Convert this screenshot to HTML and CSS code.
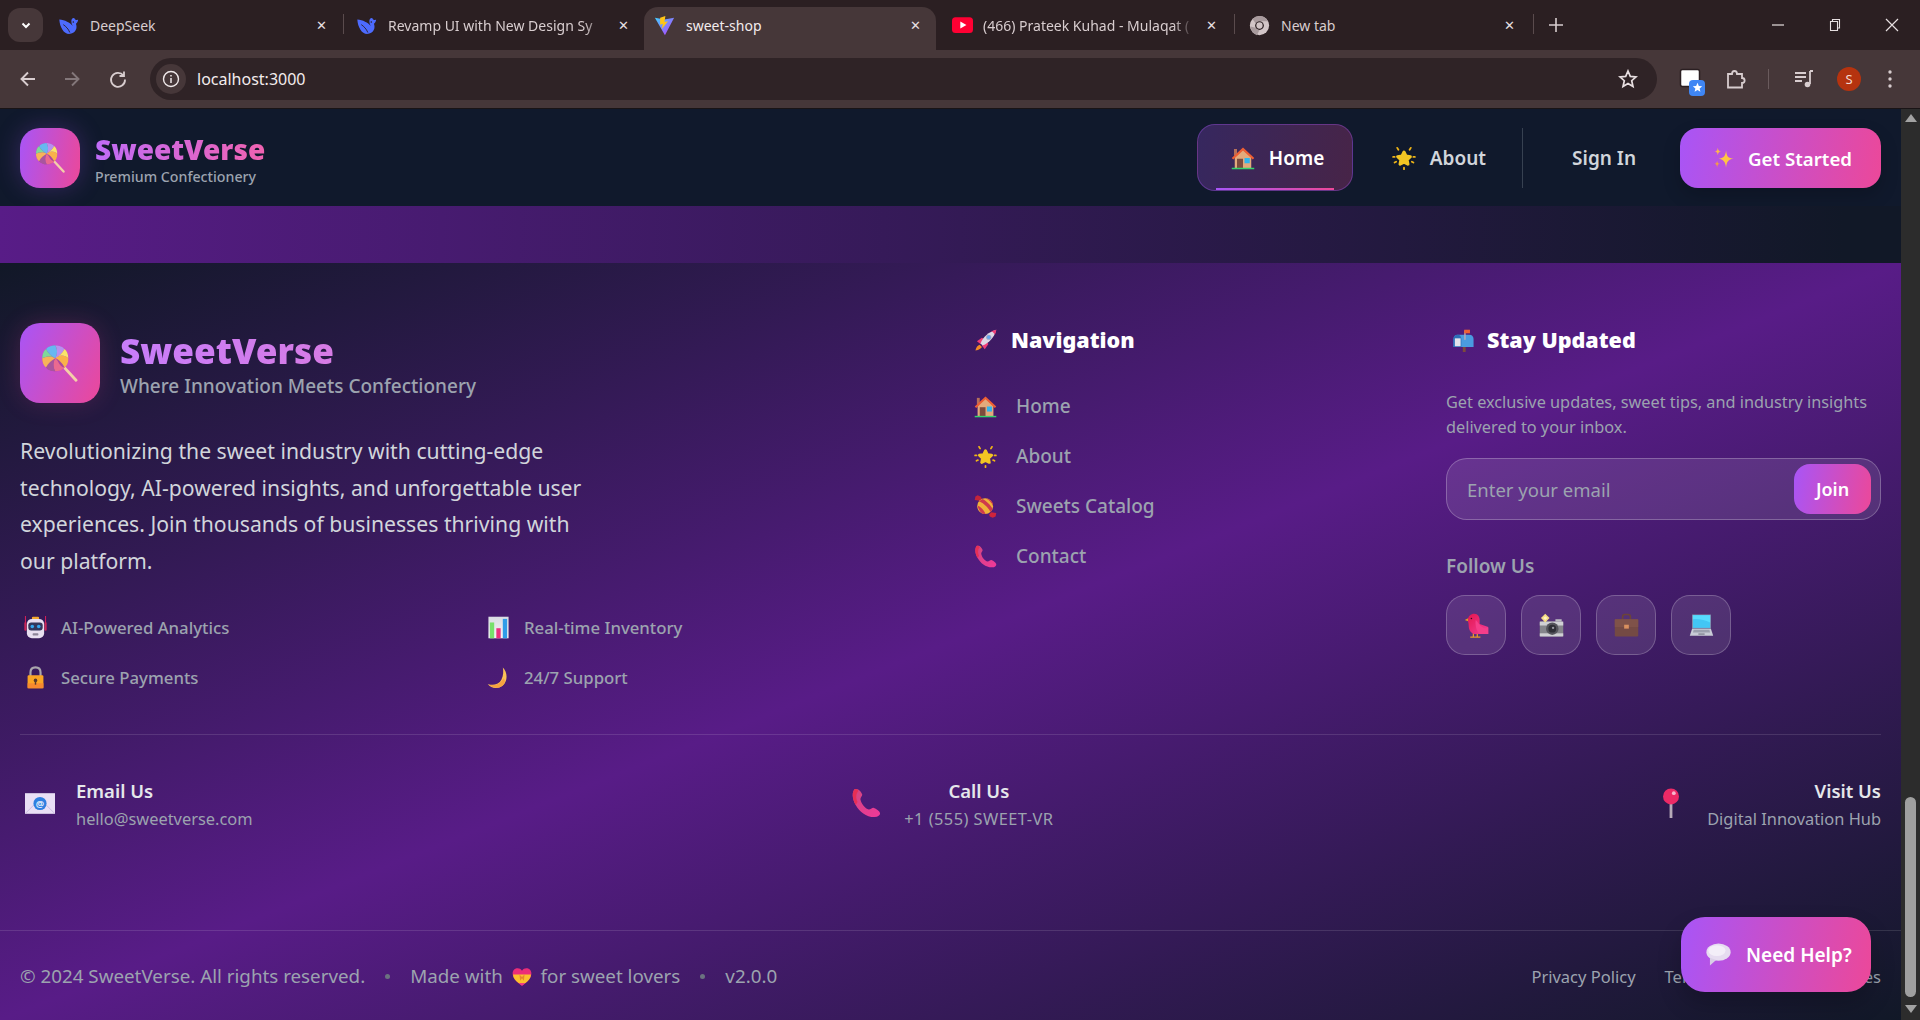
FILE: index.html
```html
<!DOCTYPE html>
<html lang="en">
<head>
<meta charset="utf-8">
<title>sweet-shop</title>
<link rel="stylesheet" href="styles.css">
</head>
<body>
<svg class="defs" width="0" height="0" aria-hidden="true">
<defs>
<linearGradient id="gpink" x1="0" y1="0" x2="1" y2="1"><stop offset="0" stop-color="#d1477f"/><stop offset="1" stop-color="#f0389a"/></linearGradient>
<linearGradient id="gchart" x1="0" y1="0" x2="0" y2="1"><stop offset="0" stop-color="#d9dce3"/><stop offset="1" stop-color="#f4f4f6"/></linearGradient>
<linearGradient id="gvite" x1="0" y1="0" x2="1" y2="1"><stop offset="0" stop-color="#41d1ff"/><stop offset="1" stop-color="#bd34fe"/></linearGradient>
<linearGradient id="gbird" x1="0" y1="0" x2="1" y2="1"><stop offset="0" stop-color="#e3174f"/><stop offset="1" stop-color="#f43f9a"/></linearGradient>
<symbol id="i-lolly" viewBox="0 0 32 32">
<path d="M18 18L29.500 30.500" stroke="#f4cfa8" stroke-width="2.400" stroke-linecap="round"/>
<circle cx="12" cy="12" r="11" fill="#a9479e"/>
<path d="M12 12C15 9 20 9 23 12C23 16 22 18 19.800 19.800C18 16 15 13 12 12Z" fill="#f9b24a"/><path d="M12 12C15 14 15 19 19.800 19.800C18 22 15 23 12 23C10 20 10 15 12 12Z" fill="#ea6a90"/><path d="M12 12C10 15 10 19 12 23C9 23 6 22 4.200 19.800C5 16 9 14 12 12Z" fill="#a9559e"/><path d="M12 12C9 14 6 16 4.200 19.800C2 18 1 15 1 12C5 10 9 10 12 12Z" fill="#f7b35a"/><path d="M12 12C9 10 5 10 1 12C1 9 2 6 4.200 4.200C6 8 9 10 12 12Z" fill="#7fd89a"/><path d="M12 12C9 10 6 8 4.200 4.200C6 2 9 1 12 1C14 4 14 9 12 12Z" fill="#67b8f0"/><path d="M12 12C14 9 14 4 12 1C15 1 18 2 19.800 4.200C18 8 15 10 12 12Z" fill="#b890f0"/><path d="M12 12C15 10 18 8 19.800 4.200C22 6 23 9 23 12C20 9 15 9 12 12Z" fill="#f8e56a"/>
</symbol>
<symbol id="i-house" viewBox="0 0 32 32">
<rect x="4" y="4" width="4" height="9" fill="#b5705a"/><path d="M5 15L16 5L27 15V30H5Z" fill="#e3aa7c"/><path d="M1 16L16 2L31 16L29 18L16 6L3 18Z" fill="#ef5f33"/><rect x="8" y="17" width="8" height="13" fill="#7d4b3d"/><rect x="18" y="16" width="7" height="7" fill="#31b5ee"/><rect x="1" y="29" width="30" height="2" fill="#35d36c"/>
</symbol>
<symbol id="i-star" viewBox="0 0 32 32">
<path d="M16 8L18.600 13.300L24.500 14.200L20.200 18.300L21.300 24.200L16 21.400L10.700 24.200L11.800 18.300L7.500 14.200L13.400 13.300Z" fill="#f3c623" stroke="#f3c623" stroke-width="4" stroke-linejoin="round"/><path d="M7 2.500L8.500 5M25 2.500L23.500 5M16 29V31M1.500 14.500H3.500M30.500 14.500H28.500M3.500 22L5.500 21M28.500 22L26.500 21" stroke="#eeb417" stroke-width="2.400" stroke-linecap="round"/>
</symbol>
<symbol id="i-sparkle" viewBox="0 0 32 32">
<path d="M19 5C20 14 22 16 30 17C22 18 20 21 19 30C18 21 15 18 8 17C15 16 18 14 19 5Z" fill="#ffc642"/><path d="M7 1C7.600 5 8.500 6 12 6.500C8.500 7 7.600 8 7 12C6.400 8 5.500 7 2 6.500C5.500 6 6.400 5 7 1Z" fill="#fdb64f"/><path d="M6 20C6.500 23 7.500 24 10 24.500C7.500 25 6.500 26 6 30C5.500 26 4.500 25 2 24.500C4.500 24 5.500 23 6 20Z" fill="#f39a4a"/>
</symbol>
<symbol id="i-rocket" viewBox="0 0 32 32">
<path d="M2 30C3 25 5 23 8 22L11 25C10 27 7 29 2 30Z" fill="#f58a26"/><path d="M4 17L11 12L14 14L9 21Z" fill="#f03d76"/><path d="M15 28L20 21L18 18L11 23Z" fill="#f03d76"/><path d="M9 20C13 11 20 4 31 1C28 12 21 19 12 23Z" fill="#ded8e4"/><path d="M24 3C26 3.500 28.500 6 29 8C30 6 30.700 3.500 31 1C28.500 1.500 26 2.300 24 3Z" fill="#f03d76"/><circle cx="20.500" cy="11.500" r="3.600" fill="#9fa4c8"/><circle cx="20.500" cy="11.500" r="2.300" fill="#62a7ee"/>
</symbol>
<symbol id="i-candy" viewBox="0 0 32 32">
<path d="M8 8L1 7L2 2L5 0.500L9 2L11 5Z" fill="#c3243a"/><path d="M24 24L31 25L30 30L26 31.500L22 30L21 27Z" fill="#d0243c"/><circle cx="15.500" cy="15.500" r="11" fill="#f0b23a"/><path d="M6.500 9C12 10 20 17 23 24L26 19.500C23 14 17 8 12 5.500ZM5 15C9 16 14 21 16 26.500L12 26C9 24 6 20 5 15ZM16 4.500C20 6 25 11 26.500 15L26 11C24 8 21 6 18 5Z" fill="#cf3a4c"/>
</symbol>
<symbol id="i-phone" viewBox="0 0 32 32">
<path d="M4 1C1 4 1 11 5 18C9 25 16 31 25 31C29 31 31 29 31 27C31 25 27 22 24 21C22 21 21 23 19 23C15 22 11 17 10 12C10 10 12 9 12 7C11 4 8 1 6 1Z" fill="url(#gpink)"/><path d="M4 1C1 4 1 11 5 18L7 15C5 11 5 6 8 3L6 1Z" fill="#e72f55"/>
</symbol>
<symbol id="i-mailbox" viewBox="0 0 32 32">
<rect x="15" y="25" width="4" height="7" fill="#7c4a3c"/><path d="M8 8H24C28 8 30 11 30 14V25H2V14C2 11 4 8 8 8Z" fill="#4a9be0"/><path d="M2 14C2 11 4 8 8 8C11 8 13 11 13 14V25H2Z" fill="#2d6fb8"/><rect x="4" y="13" width="8" height="11" fill="#e4e2ea"/><rect x="17" y="2" width="2" height="13" fill="#b7aab6"/><rect x="17" y="1" width="8" height="5" fill="#ef5f33"/>
</symbol>
<symbol id="i-bird" viewBox="0 0 32 32">
<path d="M8 31H21M12 26V31M17 26V31" stroke="#e89a27" stroke-width="1.600"/><path d="M1 9L6 6.500V11Z" fill="#e8a01e"/><path d="M5 9C5 4 9 1 13 1C18 1 20 5 20 9L20 14L31 18V27H15C9 27 6 22 6 16C6 13 5 11 5 9Z" fill="url(#gbird)"/><path d="M15 9C18 11 22 22 31 19V27H20C16 24 14 15 15 9Z" fill="#f53e8a"/><circle cx="9.500" cy="7" r="1" fill="#3b1020"/>
</symbol>
<symbol id="i-camera" viewBox="0 0 32 32">
<rect x="1" y="11" width="30" height="19" rx="1.500" fill="#85858b"/><rect x="1" y="11" width="30" height="5" fill="#d0d0d4"/><rect x="1" y="26" width="30" height="4" fill="#cfcfd3"/><rect x="21" y="8" width="8" height="3" fill="#bdbdc2"/><circle cx="17" cy="20" r="8" fill="#55555c"/><circle cx="17" cy="20" r="5" fill="#2f2f36"/><circle cx="18" cy="19" r="1.500" fill="#9a9aa2"/><path d="M8 1L13.500 6.500L8 12L2.500 6.500Z" fill="#f6dc84"/><path d="M8 4L10.500 6.500L8 9L5.500 6.500Z" fill="#fff4c2"/>
</symbol>
<symbol id="i-case" viewBox="0 0 32 32">
<path d="M11 8V5C11 3 12 2 14 2H18C20 2 21 3 21 5V8" fill="none" stroke="#6c4438" stroke-width="2"/><rect x="1" y="8" width="30" height="22" rx="1.500" fill="#744a44"/><rect x="1" y="8" width="30" height="10" fill="#7f5249"/><rect x="13" y="15" width="6" height="5" fill="#d9905f"/>
</symbol>
<symbol id="i-laptop" viewBox="0 0 32 32">
<rect x="4" y="2" width="24" height="18" fill="#8896b0"/><rect x="5" y="3" width="22" height="16" fill="#43c6f5"/><path d="M5 3H27V12C20 9 12 7 5 8Z" fill="#57dcff"/><path d="M4 20H28L31 29H1Z" fill="#c8cbd6"/><path d="M6 21.500H26L27 25H5Z" fill="#9b9fae"/><rect x="12" y="26" width="8" height="2" fill="#8b8e9c"/>
</symbol>
<symbol id="i-robot" viewBox="0 0 32 32">
<rect x="11" y="1" width="10" height="4" rx="1.500" fill="#f4a92f"/><path d="M2 0V20M30 0V20" stroke="#d81f5a" stroke-width="1.400"/><rect x="0.500" y="9" width="3" height="11" fill="#c92658"/><rect x="28.500" y="9" width="3" height="11" fill="#c92658"/><rect x="4" y="4" width="24" height="27" rx="7" fill="#e8dff0"/><rect x="6" y="9" width="20" height="11" rx="4" fill="#33375b"/><circle cx="11.500" cy="14.500" r="2.500" fill="#35a6ee"/><circle cx="20.500" cy="14.500" r="2.500" fill="#35a6ee"/><rect x="12" y="24" width="8" height="3" rx="1" fill="#8d8598"/>
</symbol>
<symbol id="i-chart" viewBox="0 0 32 32">
<rect x="2" y="1" width="28" height="30" fill="url(#gchart)"/><rect x="4" y="9" width="6" height="22" fill="#77e06c"/><rect x="13" y="17" width="6" height="14" fill="#ec2f7e"/><rect x="22" y="4" width="6" height="27" fill="#2f9ce8"/>
</symbol>
<symbol id="i-lock" viewBox="0 0 32 32">
<path d="M9 15V9C9 4.500 12 2 16 2C20 2 23 4.500 23 9V15" fill="none" stroke="#aaa6ad" stroke-width="3"/><rect x="5" y="13" width="22" height="18" rx="1.500" fill="#fba524"/><rect x="5" y="24" width="22" height="7" fill="#f88a2e"/><circle cx="16" cy="20" r="2.500" fill="#5a3a2c"/><rect x="15" y="20" width="2" height="6" fill="#5a3a2c"/>
</symbol>
<symbol id="i-moon" viewBox="0 0 32 32">
<path d="M22 2C29 9 29 21 22 27C16 32 6 32 1 25C9 28 17 25 20 19C23 13 23 7 22 2Z" fill="#fbc257"/><path d="M3 26C10 28 19 25 23 17C26 20 25 24 22 27C16 32 8 31 3 26Z" fill="#f7a340"/>
</symbol>
<symbol id="i-mail" viewBox="0 0 32 22">
<rect x="0" y="0" width="32" height="22" fill="#e9dff5"/><path d="M0 22L11 11M32 22L21 11" stroke="#c9bbe0" stroke-width="1"/><circle cx="16" cy="11" r="7" fill="#2f7fe0"/><text x="16" y="14.500" text-anchor="middle" class="mail-at">@</text>
</symbol>
<symbol id="i-pin" viewBox="0 0 20 32">
<rect x="8.500" y="14" width="3" height="18" fill="#b6aab8"/><circle cx="10" cy="9" r="8.500" fill="#ec2a66"/><circle cx="13" cy="5.500" r="2" fill="#f7b7ce"/>
</symbol>
<symbol id="i-heart" viewBox="0 0 32 32">
<path d="M16 30C6 23 1 17 1 10C1 5 5 2 9 2C12 2 14 3 16 6C18 3 20 2 23 2C27 2 31 5 31 10C31 17 26 23 16 30Z" fill="#ec2d78"/><path d="M1.500 12H30.500C30 18 26 23 21 26H11C6 23 2 18 1.500 12Z" fill="#fbc02d"/><path d="M11 26H21L16 30Z" fill="#f03a8a"/><path d="M12 12L16 16L20 12L19 22L16 18L13 22Z" fill="#e8862e"/>
</symbol>
<symbol id="i-bubble" viewBox="0 0 32 32">
<ellipse cx="16" cy="13" rx="15.500" ry="11" fill="#e6dcf0"/><path d="M5 20L5 30L13 23Z" fill="#d9cfe6"/><ellipse cx="14" cy="11" rx="11" ry="7" fill="#f3eef8"/>
</symbol>
<symbol id="i-whale" viewBox="0 0 24 24">
<path d="M1.500 5C2 14 7 22.500 14 21.500C20 20.500 22.500 15 20.500 10C21.800 9 23 7 23 5C21 6 19.500 6 18.500 3.500C14.500 3 14.500 9 17 12.500C13.500 8.500 8 5.500 1.500 5Z" fill="#4d6bfe"/><path d="M6 11C9 13 12 16 13.500 20" fill="none" stroke="#2b1f22" stroke-width="1"/><circle cx="17.500" cy="8" r="0.900" fill="#2b1f22"/>
</symbol>
<symbol id="i-vite" viewBox="0 0 24 24">
<path d="M1 3L12 5L23 3L12.500 23Z" fill="url(#gvite)"/><path d="M13 1L7 3V11L10 10L9 16L16 7L12 8Z" fill="#ffc517"/>
</symbol>
<symbol id="i-yt" viewBox="0 0 24 18">
<rect width="24" height="18" rx="4" fill="#ff0033"/><path d="M9.500 5L16.500 9L9.500 13Z" fill="#fff"/>
</symbol>
<symbol id="i-chrome" viewBox="0 0 24 24">
<circle cx="12" cy="12" r="11" fill="#d2c5c7"/><path d="M12 1A11 11 0 0 1 21.800 7H12A5 5 0 0 0 7.500 9.500L4 4.500A11 11 0 0 1 12 1ZM2 13L7.500 14.500A5 5 0 0 0 12 17L9 23A11 11 0 0 1 2 13Z" fill="#a89a9d"/><circle cx="12" cy="12" r="5" fill="#2b1f22"/><circle cx="12" cy="12" r="3.600" fill="#d2c5c7"/>
</symbol>
</defs>
</svg>

<div class="chrome">
  <div class="tabstrip">
    <button class="tab-search"><svg class="ic-12" viewBox="0 0 12 12"><path d="M2.500 4.500L6 8L9.500 4.500" fill="none" stroke="#fff" stroke-width="2"/></svg></button>
    <div class="tab tab-a"><svg class="favicon"><use href="#i-whale"/></svg><span class="tab-title">DeepSeek</span><span class="tab-x">✕</span></div>
    <i class="tab-sep"></i>
    <div class="tab tab-b"><svg class="favicon"><use href="#i-whale"/></svg><span class="tab-title tab-fade">Revamp UI with New Design Sy</span><span class="tab-x">✕</span></div>
    <div class="tab tab-active"><svg class="favicon"><use href="#i-vite"/></svg><span class="tab-title">sweet-shop</span><span class="tab-x">✕</span></div>
    <div class="tab tab-d"><svg class="favicon yt"><use href="#i-yt"/></svg><span class="tab-title tab-fade">(466) Prateek Kuhad - Mulaqat (</span><span class="tab-x">✕</span></div>
    <i class="tab-sep"></i>
    <div class="tab tab-e"><svg class="favicon"><use href="#i-chrome"/></svg><span class="tab-title">New tab</span><span class="tab-x">✕</span></div>
    <i class="tab-sep"></i>
    <svg class="new-tab" viewBox="0 0 14 14"><path d="M7 0V14M0 7H14" stroke="#d8cdcf" stroke-width="1.600"/></svg>
    <div class="win-btns">
      <svg class="win" viewBox="0 0 14 14"><path d="M1 7H13" stroke="#e6dfe0" stroke-width="1.200"/></svg>
      <svg class="win" viewBox="0 0 14 14"><path d="M2.500 3.500H9.500V12.500H2.500ZM4.500 3.500V1.500H11.500V10H9.500" fill="none" stroke="#e6dfe0" stroke-width="1.100"/></svg>
      <svg class="win" viewBox="0 0 14 14"><path d="M1 1L13 13M13 1L1 13" stroke="#e6dfe0" stroke-width="1.200"/></svg>
    </div>
  </div>
  <div class="toolbar">
    <svg class="tool t-back" viewBox="0 0 20 20"><path d="M17 10H4M10 3.500L3.500 10L10 16.500" fill="none" stroke="#d8cdcf" stroke-width="1.900"/></svg>
    <svg class="tool t-fwd" viewBox="0 0 20 20"><path d="M3 10H16M10 3.500L16.500 10L10 16.500" fill="none" stroke="#83777a" stroke-width="1.900"/></svg>
    <svg class="tool t-reload" viewBox="0 0 20 20"><path d="M15.500 6.500A7 7 0 1 0 17 10.500M16 2.500V7H11.500" fill="none" stroke="#d8cdcf" stroke-width="1.800"/></svg>
    <div class="omnibox">
      <span class="info-chip"><svg class="ic-18" viewBox="0 0 18 18"><circle cx="9" cy="9" r="7.500" fill="none" stroke="#f0e9ea" stroke-width="1.400"/><path d="M9 8V13M9 5V6.500" stroke="#f0e9ea" stroke-width="1.500"/></svg></span>
      <span class="url">localhost:3000</span>
      <svg class="omni-star" viewBox="0 0 20 20"><path d="M10 2L12.300 7.400L18 7.900L13.700 11.700L15 17.500L10 14.500L5 17.500L6.300 11.700L2 7.900L7.700 7.400Z" fill="none" stroke="#e8dfe1" stroke-width="1.700"/></svg>
    </div>
    <div class="tool-right">
      <span class="ext-box"><svg class="ext-ic" viewBox="0 0 22 22"><rect x="1.500" y="1.500" width="19" height="17" rx="2" fill="#fff" stroke="#2b1f22" stroke-width="1.500"/></svg><span class="ext-badge"><svg viewBox="0 0 14 14" class="ic-11"><path d="M7 1L8.700 5L13 5.400L9.700 8.200L10.700 12.500L7 10.200L3.300 12.500L4.300 8.200L1 5.400L5.300 5Z" fill="#fff"/></svg></span></span>
      <svg class="tool t-puzzle" viewBox="0 0 22 22"><path d="M4 6H8C8 2 13 2 13 6H18V10C21.500 10 21.500 15 18 15V19.500H4Z" fill="none" stroke="#d8cdcf" stroke-width="1.800"/></svg>
      <i class="tool-sep"></i>
      <svg class="tool t-media" viewBox="0 0 22 22"><path d="M2 5H13M2 9H13M2 13H9M17 3H20M17 3V16" fill="none" stroke="#d8cdcf" stroke-width="1.800"/><circle cx="14.500" cy="16.500" r="2.800" fill="#d8cdcf"/></svg>
      <span class="avatar">S</span>
      <svg class="tool t-menu" viewBox="0 0 6 20"><circle cx="3" cy="3" r="1.700" fill="#d8cdcf"/><circle cx="3" cy="10" r="1.700" fill="#d8cdcf"/><circle cx="3" cy="17" r="1.700" fill="#d8cdcf"/></svg>
    </div>
  </div>
</div>

<div class="viewport">
  <div class="page">
    <header class="site-header">
      <div class="brand">
        <span class="logo"><svg class="logo-ic"><use href="#i-lolly"/></svg></span>
        <div class="brand-text">
          <div class="brand-name">SweetVerse</div>
          <div class="brand-sub">Premium Confectionery</div>
        </div>
      </div>
      <nav class="top-nav">
        <a class="nav-item nav-active"><svg class="em-24"><use href="#i-house"/></svg>Home</a>
        <a class="nav-item nav-about"><svg class="em-24"><use href="#i-star"/></svg>About</a>
        <i class="nav-sep"></i>
        <a class="nav-signin">Sign In</a>
        <a class="nav-cta"><svg class="em-22"><use href="#i-sparkle"/></svg>Get Started</a>
      </nav>
    </header>
    <div class="strip"></div>
    <footer class="footer">
      <div class="footer-main">
        <section class="col-brand">
          <div class="f-brand">
            <span class="f-logo"><svg class="f-logo-ic"><use href="#i-lolly"/></svg></span>
            <div>
              <div class="f-name">SweetVerse</div>
              <div class="f-tag">Where Innovation Meets Confectionery</div>
            </div>
          </div>
          <p class="f-desc">Revolutionizing the sweet industry with cutting-edge technology, AI-powered insights, and unforgettable user experiences. Join thousands of businesses thriving with our platform.</p>
          <div class="features">
            <div class="feature"><svg class="em-23"><use href="#i-robot"/></svg>AI-Powered Analytics</div>
            <div class="feature"><svg class="em-23"><use href="#i-chart"/></svg>Real-time Inventory</div>
            <div class="feature"><svg class="em-23"><use href="#i-lock"/></svg>Secure Payments</div>
            <div class="feature"><svg class="em-23"><use href="#i-moon"/></svg>24/7 Support</div>
          </div>
        </section>
        <section class="col-nav">
          <h3 class="f-h"><svg class="em-23"><use href="#i-rocket"/></svg>Navigation</h3>
          <ul class="f-links">
            <li><svg class="em-23"><use href="#i-house"/></svg>Home</li>
            <li><svg class="em-23"><use href="#i-star"/></svg>About</li>
            <li><svg class="em-23"><use href="#i-candy"/></svg>Sweets Catalog</li>
            <li><svg class="em-23"><use href="#i-phone"/></svg>Contact</li>
          </ul>
        </section>
        <section class="col-news">
          <h3 class="f-h f-h-news"><svg class="em-23"><use href="#i-mailbox"/></svg>Stay Updated</h3>
          <p class="news-desc">Get exclusive updates, sweet tips, and industry insights delivered to your inbox.</p>
          <div class="news-form">
            <span class="news-ph">Enter your email</span>
            <button class="news-btn">Join</button>
          </div>
          <div class="follow">Follow Us</div>
          <div class="socials">
            <span class="social"><svg class="em-25"><use href="#i-bird"/></svg></span>
            <span class="social"><svg class="em-25"><use href="#i-camera"/></svg></span>
            <span class="social"><svg class="em-25"><use href="#i-case"/></svg></span>
            <span class="social"><svg class="em-25"><use href="#i-laptop"/></svg></span>
          </div>
        </section>
      </div>
      <div class="contact-row">
        <div class="contact">
          <svg class="c-mail"><use href="#i-mail"/></svg>
          <div><div class="c-title">Email Us</div><div class="c-sub">hello@sweetverse.com</div></div>
        </div>
        <div class="contact contact-mid">
          <svg class="c-ic"><use href="#i-phone"/></svg>
          <div><div class="c-title">Call Us</div><div class="c-sub">+1 (555) SWEET-VR</div></div>
        </div>
        <div class="contact contact-end">
          <svg class="c-pin"><use href="#i-pin"/></svg>
          <div><div class="c-title">Visit Us</div><div class="c-sub">Digital Innovation Hub</div></div>
        </div>
      </div>
      <div class="f-bottom">
        <div class="legal">
          <span>© 2024 SweetVerse. All rights reserved.</span><b class="dot"></b>
          <span class="made">Made with <svg class="em-20"><use href="#i-heart"/></svg> for sweet lovers</span><b class="dot"></b>
          <span>v2.0.0</span>
        </div>
        <div class="legal-links"><span>Privacy Policy</span><span>Terms of Service</span><span>Cookies</span></div>
      </div>
    </footer>
    <button class="help"><svg class="em-help"><use href="#i-bubble"/></svg>Need Help?</button>
  </div>
  <div class="scrollbar">
    <span class="arrow-up"></span>
    <span class="thumb"></span>
    <span class="arrow-down"></span>
  </div>
</div>
</body>
</html>
```
FILE: styles.css
```css
* { box-sizing: border-box; }
html, body { margin: 0; padding: 0; height: 1020px; overflow: hidden; }
body { font-family: "Noto Sans", "Open Sans", sans-serif; background: #111827; color: #fff; display: flex; flex-direction: column; }
.defs { position: absolute; }
p, h3, ul { margin: 0; padding: 0; }
ul { list-style: none; }
button { border: 0; font-family: inherit; padding: 0; }

/* browser chrome */
.chrome { height: 109px; flex: none; }
.tabstrip { height: 50px; background: #2b1f22; display: flex; align-items: flex-start; position: relative; }
.tab-search { width: 35px; height: 34px; margin: 8px 0 0 8px; border-radius: 12px; background: #463739; display: flex; align-items: center; justify-content: center; }
.ic-12 { width: 12px; height: 12px; }
.ic-18 { width: 18px; height: 18px; }
.ic-11 { width: 11px; height: 11px; display: block; }
.tab { height: 43px; margin-top: 7px; display: flex; align-items: center; padding: 0 15px 7px 15px; font-size: 14px; color: #d8cdcf; flex: none; }
.tab-a { width: 300px; }
.tab-b { width: 300px; padding-left: 12px; padding-right: 14px; }
.tab-active { width: 292px; padding-left: 10px; padding-right: 14px; background: #463739; border-radius: 14px 14px 0 0; color: #f3eced; height: 43px; }
.tab-d { width: 298px; padding-left: 16px; padding-right: 16px; }
.tab-d .favicon { margin-right: 10px; }
.tab-e { width: 298px; padding-left: 14px; padding-right: 17px; }
.favicon { width: 21px; height: 21px; flex: none; margin-right: 11px; }
.favicon.yt { height: 16px; }
.tab-title { flex: 1; white-space: nowrap; overflow: hidden; margin-right: 10px; }
.tab-fade { -webkit-mask-image: linear-gradient(90deg, #000 90%, transparent); mask-image: linear-gradient(90deg, #000 90%, transparent); }
.tab-x { font-size: 13px; color: #e6dfe0; flex: none; width: 14px; text-align: center; }
.tab-sep { width: 1px; height: 20px; background: #5a4b4d; margin-top: 14px; flex: none; }
.new-tab { width: 14px; height: 14px; margin: 18px 0 0 15px; }
.win-btns { margin-left: auto; display: flex; gap: 43px; padding: 18px 21px 0 0; }
.win { width: 14px; height: 14px; }
.toolbar { height: 59px; background: #463739; display: flex; align-items: center; padding: 0 0 1px 18px; border-bottom: 1px solid #1a1416; }
.tool { flex: none; }
.t-back, .t-fwd, .t-reload { width: 20px; height: 20px; }
.t-fwd { margin-left: 24px; }
.t-reload { margin-left: 26px; }
.omnibox { width: 1507px; height: 42px; margin-left: 22px; background: #2f2326; border-radius: 21px; display: flex; align-items: center; padding: 0 19px 0 6px; }
.info-chip { width: 30px; height: 30px; border-radius: 50%; background: #463739; display: flex; align-items: center; justify-content: center; flex: none; }
.url { margin-left: 11px; font-size: 16px; color: #f3eced; flex: 1; }
.omni-star { width: 20px; height: 20px; flex: none; }
.tool-right { display: flex; align-items: center; margin-left: 22px; }
.ext-box { position: relative; width: 22px; height: 22px; flex: none; }
.ext-ic { width: 22px; height: 22px; display: block; }
.ext-badge { position: absolute; left: 10px; top: 12px; width: 16px; height: 16px; border-radius: 4px; background: #3f86f4; display: flex; align-items: center; justify-content: center; }
.t-puzzle { width: 22px; height: 22px; margin-left: 23px; }
.tool-sep { width: 1px; height: 20px; background: #6a5b5d; margin-left: 22px; }
.t-media { width: 22px; height: 22px; margin-left: 24px; }
.avatar { width: 24px; height: 24px; margin-left: 22px; border-radius: 50%; background: #b5330f; font-size: 13px; display: flex; align-items: center; justify-content: center; color: #f3d9d2; flex: none; }
.t-menu { width: 6px; height: 20px; margin-left: 26px; }

/* viewport */
.viewport { flex: 1; display: flex; min-height: 0; }
.page { flex: 1; min-width: 0; position: relative; overflow: hidden; display: flex; flex-direction: column; }
.scrollbar { width: 19px; flex: none; background: #2c2c2c; display: flex; flex-direction: column; align-items: center; position: relative; }
.arrow-up { width: 0; height: 0; border: 6px solid transparent; border-top: 0; border-bottom: 8px solid #a3a3a3; margin-top: 5px; }
.thumb { width: 11px; height: 200px; margin-top: 675px; background: #9f9f9f; border-radius: 6px; }
.arrow-down { width: 0; height: 0; border: 6px solid transparent; border-bottom: 0; border-top: 8px solid #a3a3a3; margin-top: 8px; }

/* header */
.site-header { height: 97px; flex: none; background: #10192c; display: flex; align-items: center; justify-content: space-between; padding: 0 20px; }
.brand { display: flex; align-items: center; gap: 15px; }
.logo { width: 60px; height: 60px; border-radius: 20px; background: linear-gradient(100deg, #a855f7, #ec4899); display: flex; align-items: center; justify-content: center; box-shadow: 0 0 24px rgba(168, 85, 247, .25); }
.logo-ic { width: 31px; height: 31px; }
.brand-text { padding-top: 3px; }
.brand-name { font-size: 28px; font-weight: 900; line-height: 36px; background: linear-gradient(90deg, #c06cf8, #f062b0); -webkit-background-clip: text; background-clip: text; color: transparent; }
.brand-sub { font-size: 14.200px; font-weight: 500; color: #9ca3af; line-height: 20px; }
.top-nav { display: flex; align-items: center; }
.nav-item { display: flex; align-items: center; gap: 14px; font-size: 19px; font-weight: 600; color: #d1d5db; padding-top: 1px; }
.em-24 { width: 24px; height: 24px; flex: none; }
.em-22 { width: 22px; height: 22px; flex: none; }
.em-23 { width: 23px; height: 23px; flex: none; }
.em-25 { width: 25px; height: 25px; flex: none; }
.em-20 { width: 20px; height: 20px; flex: none; vertical-align: -4px; margin: 0 4px; }
.nav-active { position: relative; width: 156px; height: 67px; padding-left: 33px; color: #fff; border-radius: 18px; border: 1px solid rgba(168, 85, 247, .35); background: linear-gradient(100deg, rgba(168, 85, 247, .25), rgba(236, 72, 153, .25)); }
.nav-active::after { content: ""; position: absolute; left: 18px; right: 18px; bottom: 0; height: 2px; background: linear-gradient(90deg, #a855f7, #ec4899); }
.nav-about { margin-left: 39px; }
.nav-sep { width: 1px; height: 60px; background: #374151; margin-left: 36px; }
.nav-signin { margin-left: 49px; font-size: 19px; font-weight: 600; color: #d1d5db; padding-top: 1px; }
.nav-cta { margin-left: 44px; width: 201px; height: 60px; border-radius: 18px; background: linear-gradient(100deg, #a855f7, #ec4899); display: flex; align-items: center; gap: 13px; padding: 1px 0 0 33px; font-size: 18.700px; font-weight: 600; color: #fff; box-shadow: 0 8px 18px rgba(0, 0, 0, .18); }

/* strip */
.strip { height: 57px; flex: none; background: linear-gradient(91deg, #581c87, #111827 97%); }

/* footer */
.footer { flex: 1; min-height: 0; display: flex; flex-direction: column; background: linear-gradient(to bottom right, #111827, #581c87, #111827); }
.footer-main { display: grid; grid-template-columns: 913px 433px 1fr; column-gap: 40px; margin: 0 20px; padding: 60px 0 43px; border-bottom: 1px solid rgba(255, 255, 255, .12); }
.f-brand { display: flex; align-items: center; gap: 20px; }
.f-logo { width: 80px; height: 80px; border-radius: 20px; background: linear-gradient(115deg, #a855f7, #ec4899); display: flex; align-items: center; justify-content: center; box-shadow: 0 0 24px rgba(236, 72, 153, .2); }
.f-logo-ic { width: 38px; height: 38px; }
.f-name { font-size: 35.200px; font-weight: 900; line-height: 45px; background: linear-gradient(90deg, #c77dfa, #e17ad6); -webkit-background-clip: text; background-clip: text; color: transparent; }
.f-tag { font-size: 19px; font-weight: 500; color: #9ca3af; line-height: 26px; }
.f-desc { width: 585px; margin-top: 30px; font-size: 21.200px; line-height: 36.700px; color: #d1d5db; }
.features { display: grid; grid-template-columns: 1fr 1fr; column-gap: 13px; row-gap: 23px; margin-top: 34px; }
.feature { display: flex; align-items: center; gap: 14px; padding-left: 4px; height: 27px; font-size: 16.750px; font-weight: 500; color: #9ca3af; }
.f-h { display: flex; align-items: center; gap: 14px; font-size: 21.500px; font-weight: 900; line-height: 30px; margin-left: 1px; }
.col-nav, .col-news { padding-top: 2px; }
.f-links { margin-top: 36px; display: flex; flex-direction: column; gap: 20px; }
.f-links li { display: flex; align-items: center; gap: 19px; margin-left: 1px; height: 30px; font-size: 19px; font-weight: 500; color: #9ca3af; }
.f-h-news { margin-left: 6px; gap: 12px; }
.news-desc { margin-top: 35px; font-size: 16.300px; line-height: 25px; color: #9ca3af; }
.news-form { margin-top: 18px; height: 62px; border-radius: 21px; border: 1px solid rgba(255, 255, 255, .25); background: rgba(255, 255, 255, .1); display: flex; align-items: center; justify-content: space-between; padding: 0 9px 0 20px; }
.news-ph { font-size: 18.500px; color: #9ca3af; }
.news-btn { width: 77px; height: 50px; border-radius: 16px; background: linear-gradient(100deg, #a855f7, #ec4899); color: #fff; font-size: 18px; font-weight: 600; }
.follow { margin-top: 32px; font-size: 19px; font-weight: 600; color: #9ca3af; line-height: 28px; }
.socials { display: flex; gap: 15px; margin-top: 15px; }
.social { width: 60px; height: 60px; border-radius: 19px; border: 1px solid rgba(255, 255, 255, .22); background: rgba(255, 255, 255, .1); display: flex; align-items: center; justify-content: center; }

.contact-row { display: flex; justify-content: space-between; padding: 42px 20px 0; height: 196px; border-bottom: 1px solid rgba(255, 255, 255, .12); }
.contact { display: flex; gap: 21px; }
.contact-mid { text-align: center; margin-right: 9px; gap: 23px; }
.contact-mid .c-sub { letter-spacing: .45px; }
.contact-end { text-align: right; gap: 26px; }
.c-mail { width: 30px; height: 21px; margin: 16px 0 0 5px; flex: none; }
.c-ic { width: 30px; height: 30px; margin-top: 11px; flex: none; }
.c-pin { width: 20px; height: 30px; margin-top: 11px; flex: none; }
.c-title { font-size: 18.500px; font-weight: 600; line-height: 28px; color: #e5e7eb; }
.c-sub { font-size: 16.400px; line-height: 28px; color: #9ca3af; }

.f-bottom { flex: 1; display: flex; align-items: center; justify-content: space-between; padding: 2px 20px 0; font-size: 18.800px; color: #9ca3af; }
.legal { display: flex; align-items: center; }
.dot { width: 5px; height: 5px; border-radius: 50%; background: #6b7280; margin: 0 20px; }
.legal-links { display: flex; gap: 29px; font-size: 16.500px; }

.help { position: absolute; left: 1681px; top: 808px; width: 190px; height: 75px; border-radius: 24px; background: linear-gradient(100deg, #a855f7, #ec4899); color: #fff; font-size: 19px; font-weight: 600; display: flex; align-items: center; gap: 15px; padding-left: 25px; box-shadow: 0 12px 24px rgba(0, 0, 0, .2); }
.em-help { width: 25px; height: 25px; flex: none; }
.mail-at { font: 700 10px "Noto Sans", sans-serif; fill: #dbe8fb; }
```
